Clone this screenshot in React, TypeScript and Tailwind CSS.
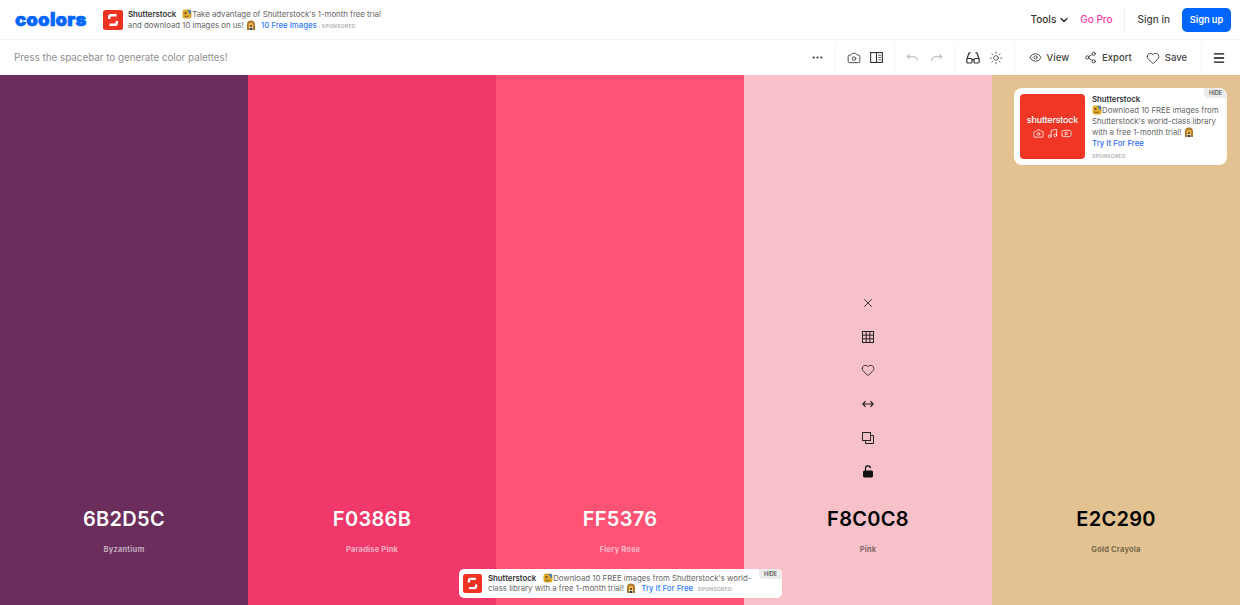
import React from 'react';
import { Camera, ChevronDown, Eye, Heart, Menu, MoreHorizontal, Music, Share2, Sun, X, Youtube } from 'lucide-react';

const palette = [
  { hex: '6B2D5C', name: 'Byzantium', bg: 'bg-[#6b2d5c]', text: 'text-white', sub: 'text-white/60' },
  { hex: 'F0386B', name: 'Paradise Pink', bg: 'bg-[#f0386b]', text: 'text-white', sub: 'text-white/60' },
  { hex: 'FF5376', name: 'Fiery Rose', bg: 'bg-[#ff5376]', text: 'text-white', sub: 'text-white/60' },
  { hex: 'F8C0C8', name: 'Pink', bg: 'bg-[#f8c0c8]', text: 'text-black', sub: 'text-black/50' },
  { hex: 'E2C290', name: 'Gold Crayola', bg: 'bg-[#e2c290]', text: 'text-black', sub: 'text-black/50' },
];

// little shutterstock mark
const ShutterMark = ({ className }: { className: string }) => (
  <svg viewBox="0 0 20 20" className={className}>
    <rect width="20" height="20" rx="2.500" fill="#ee3224" />
    <path d="M5 9V7A3 3 0 0 1 8 4H13.500V6.400H8.400A1 1 0 0 0 7.400 7.400V9Z" fill="#fff" />
    <path d="M15 11V13A3 3 0 0 1 12 16H6.500V13.600H11.600A1 1 0 0 0 12.600 12.600V11Z" fill="#fff" />
  </svg>
);

const MaskEmoji = () => (
  <svg viewBox="0 0 10 10" className="inline-block w-[10px] h-[10px] align-[-2px]">
    <rect x="0.500" y="0.500" width="9" height="9" rx="2.500" fill="#e0a92e" />
    <path d="M5 1h4v5z" fill="#4a7fb0" />
    <circle cx="3.500" cy="4" r="1" fill="#5a4420" />
    <path d="M2.500 7q2 1.500 4 0" stroke="#5a4420" fill="none" strokeWidth="0.800" />
  </svg>
);

const ShockEmoji = () => (
  <svg viewBox="0 0 10 10" className="inline-block w-[10px] h-[10px] align-[-2px]">
    <path d="M1 10V4.500a4 4 0 0 1 8 0V10H7V5H3v5Z" fill="#a9772a" />
    <circle cx="5" cy="5" r="2.500" fill="#e8b04a" />
    <ellipse cx="5" cy="6.200" rx="0.800" ry="1.100" fill="#4a2c10" />
    <path d="M3.500 8h3v2h-3z" fill="#3d3a38" />
  </svg>
);

const Divider = () => <div className="w-px h-[28px] bg-[#f3f3f3]" />;

const UndoIcon = ({ flip }: { flip?: boolean }) => (
  <svg viewBox="0 0 14 10" className={`w-[13px] h-[10px] ${flip ? '-scale-x-100' : ''}`} fill="none" stroke="#c4c4c4" strokeWidth="1.200">
    <path d="M4 1 1.200 3.500 4 6" />
    <path d="M1.500 3.500H7c3 0 5 1.500 5.500 4.500" />
  </svg>
);

const PanelIcon = () => (
  <svg viewBox="0 0 14 12" className="w-[13px] h-[11px]" fill="none" stroke="#333" strokeWidth="1.200">
    <rect x="0.600" y="0.600" width="12.800" height="10.800" />
    <path d="M7 .6v10.800" />
    <path d="M9 3.500h3M9 6h3M9 8.500h3" strokeWidth="0.900" />
  </svg>
);

const GlassesIcon = () => (
  <svg viewBox="0 0 14 12" className="w-[14px] h-[12px]" fill="none" stroke="#333" strokeWidth="1.200">
    <path d="M3 .8 1 7M11 .8 13 7M3 .8h1.500M11 .8H9.500" />
    <rect x="0.800" y="6.500" width="5.200" height="4.500" rx="1.200" />
    <rect x="8" y="6.500" width="5.200" height="4.500" rx="1.200" />
    <path d="M6 7.800q1-.8 2 0" />
  </svg>
);

const GridIcon = () => (
  <svg viewBox="0 0 12 12" className="w-[12px] h-[12px]" fill="none" stroke="#222" strokeWidth="1">
    <rect x="0.500" y="0.500" width="11" height="11" />
    <path d="M4.170 .5v11M7.830 .5v11M.5 4.170h11M.5 7.830h11" />
  </svg>
);

const ResizeIcon = () => (
  <svg viewBox="0 0 12 8" className="w-[12px] h-[8px]" fill="none" stroke="#222" strokeWidth="1.200">
    <path d="M1 4h10M3.500 1.200 .9 4l2.600 2.800M8.500 1.200 11.100 4 8.500 6.800" />
  </svg>
);

const CopyIcon = () => (
  <svg viewBox="0 0 12 12" className="w-[12px] h-[12px]" fill="none" stroke="#222" strokeWidth="1">
    <rect x="0.500" y="0.500" width="8" height="8" />
    <path d="M8.500 3.500h3v8h-8v-3" />
  </svg>
);

const LockOpen = () => (
  <svg viewBox="0 0 12 13" className="w-[12px] h-[13px]">
    <path d="M3.500 6V3.500a2.500 2.500 0 0 1 5-.4" fill="none" stroke="#111" strokeWidth="1.200" />
    <rect x="1" y="5.500" width="10" height="7" rx="1.500" fill="#111" />
  </svg>
);

const HideTag = ({ round }: { round: string }) => (
  <span className={`absolute top-0 right-0 bg-[#ececec] text-[#555] text-[5.500px] font-semibold leading-[10px] px-[5px] ${round}`}>HIDE</span>
);

export default function App() {
  return (
    <div className="h-[605px] w-[1240px] flex flex-col overflow-hidden relative bg-white font-['Inter',sans-serif]">
      {/* top nav */}
      <header className="h-[40px] shrink-0 flex items-center border-b border-[#f2f2f2] pl-[15px] pr-[9px]">
        <span className="text-[#0066ff] text-[18.500px] font-black leading-none tracking-[0.2px] w-[88px] [-webkit-text-stroke:0.6px_#0066ff]">coolors</span>
        <ShutterMark className="w-[20px] h-[20px] shrink-0" />
        <div className="ml-[5px] mt-[1px] w-[270px] text-[7.800px] leading-[11px] text-[#666]">
          <div className="whitespace-nowrap">
            <span className="font-semibold text-[#333] mr-[6px]">Shutterstock</span>
            <MaskEmoji />Take advantage of Shutterstock's 1-month free trial
          </div>
          <div className="whitespace-nowrap">
            and download 10 images on us! <ShockEmoji />
            <span className="text-[#2f7bff] ml-[5px] font-medium">10 Free Images</span>
            <span className="ml-[5px] text-[5px] font-semibold text-[#aaa] tracking-[0.3px]">SPONSORED</span>
          </div>
        </div>
        <div className="ml-auto flex items-center">
          <span className="text-[10px] font-medium text-[#333]">Tools</span>
          <ChevronDown className="w-[12px] h-[12px] ml-[2px] text-[#222]" strokeWidth={2.500} />
          <span className="ml-[10px] text-[10px] font-medium text-[#ff3ea5]">Go Pro</span>
          <div className="ml-[11px] w-px h-[24px] bg-[#f0f0f0]" />
          <span className="ml-[13px] text-[10px] font-medium text-[#444]">Sign in</span>
          <button className="ml-[12px] w-[49px] h-[24px] rounded-[5px] bg-[#0066ff] text-white text-[9.200px] font-semibold">Sign up</button>
        </div>
      </header>

      {/* toolbar */}
      <div className="h-[35px] shrink-0 flex items-center pl-[14px] pr-[14px]">
        <span className="mt-[1px] text-[9.800px] text-[#8f8f8f]">Press the spacebar to generate color palettes!</span>
        <div className="ml-auto flex items-center text-[#333]">
          <MoreHorizontal className="w-[13px] h-[13px]" />
          <div className="ml-[11px]"><Divider /></div>
          <Camera className="ml-[11px] w-[14px] h-[14px]" strokeWidth={1.500} />
          <div className="ml-[9px]"><PanelIcon /></div>
          <div className="ml-[11px]"><Divider /></div>
          <div className="ml-[11px]"><UndoIcon /></div>
          <div className="ml-[11px]"><UndoIcon flip /></div>
          <div className="ml-[11px]"><Divider /></div>
          <div className="ml-[11px]"><GlassesIcon /></div>
          <Sun className="ml-[9px] w-[14px] h-[14px]" strokeWidth={1.300} />
          <div className="ml-[11px]"><Divider /></div>
          <Eye className="ml-[14px] w-[13px] h-[13px]" strokeWidth={1.500} />
          <span className="ml-[5px] mt-[1px] text-[9.500px] font-medium text-[#444]">View</span>
          <Share2 className="ml-[15px] w-[13px] h-[13px]" strokeWidth={1.500} />
          <span className="ml-[5px] mt-[1px] text-[9.500px] font-medium text-[#444]">Export</span>
          <Heart className="ml-[14px] w-[14px] h-[14px]" strokeWidth={1.500} />
          <span className="ml-[5px] mt-[1px] text-[9.500px] font-medium text-[#444]">Save</span>
          <div className="ml-[14px]"><Divider /></div>
          <Menu className="ml-[10px] w-[14px] h-[14px] text-[#111]" strokeWidth={2.200} />
        </div>
      </div>

      {/* colour columns */}
      <main className="flex-1 flex">
        {palette.map((c) => (
          <section key={c.hex} className={`flex-1 flex flex-col items-center justify-end pb-[50px] ${c.bg}`}>
            {c.hex === 'F8C0C8' && (
              <div className="flex flex-col items-center mb-[19px] text-[#222]">
                <div className="h-[33.600px] flex items-center"><X className="w-[14px] h-[14px]" strokeWidth={1.500} /></div>
                <div className="h-[33.600px] flex items-center"><GridIcon /></div>
                <div className="h-[33.600px] flex items-center"><Heart className="w-[14px] h-[14px]" strokeWidth={1.500} /></div>
                <div className="h-[33.600px] flex items-center"><ResizeIcon /></div>
                <div className="h-[33.600px] flex items-center"><CopyIcon /></div>
                <div className="h-[33.600px] flex items-center"><LockOpen /></div>
              </div>
            )}
            <div className={`text-[20px] leading-[24px] font-semibold tracking-[0.300px] ${c.text}`}>{c.hex}</div>
            <div className={`mt-[14px] text-[7.500px] leading-[10px] font-bold tracking-[0.200px] ${c.sub}`}>{c.name}</div>
          </section>
        ))}
      </main>

      {/* side ad */}
      <aside className="absolute left-[1014px] top-[88px] w-[213px] h-[77px] rounded-[8px] bg-white flex p-[6px]">
        <HideTag round="rounded-tr-[8px] rounded-bl-[5px]" />
        <div className="w-[65px] h-[65px] rounded-[4px] bg-[#f03726] flex flex-col items-center justify-center shrink-0">
          <span className="text-white text-[9px] font-medium leading-none tracking-[-0.2px]">shutterstock</span>
          <div className="flex gap-[3px] mt-[4px] text-white/80">
            <Camera className="w-[11px] h-[11px]" />
            <Music className="w-[11px] h-[11px]" />
            <Youtube className="w-[11px] h-[11px]" />
          </div>
        </div>
        <div className="ml-[7px] text-[7.800px] leading-[11px] text-[#666]">
          <div className="font-semibold text-[#333]">Shutterstock</div>
          <div className="whitespace-nowrap"><MaskEmoji />Download 10 FREE images from</div>
          <div className="whitespace-nowrap">Shutterstock's world-class library</div>
          <div className="whitespace-nowrap">with a free 1-month trial! <ShockEmoji /></div>
          <div className="text-[#2f6bff] font-medium">Try It For Free</div>
          <div className="text-[5px] font-semibold text-[#aaa] tracking-[0.3px] mt-[2px]">SPONSORED</div>
        </div>
      </aside>

      {/* bottom ad */}
      <aside className="absolute left-[459px] top-[569px] w-[323px] h-[29px] rounded-[5px] bg-white flex items-center pl-[4px]">
        <HideTag round="rounded-tr-[5px] rounded-bl-[4px]" />
        <ShutterMark className="w-[19px] h-[19px] shrink-0" />
        <div className="ml-[6px] text-[7.800px] leading-[10.500px] text-[#666]">
          <div className="whitespace-nowrap">
            <span className="font-semibold text-[#333] mr-[6px]">Shutterstock</span>
            <span className="ml-[1px]"><MaskEmoji /></span>Download 10 FREE images from Shutterstock's world-
          </div>
          <div className="whitespace-nowrap">
            class library with a free 1-month trial! <ShockEmoji />
            <span className="text-[#2f7bff] ml-[5px] font-medium">Try It For Free</span>
            <span className="ml-[5px] text-[5px] font-semibold text-[#aaa] tracking-[0.3px]">SPONSORED</span>
          </div>
        </div>
      </aside>
    </div>
  );
}
